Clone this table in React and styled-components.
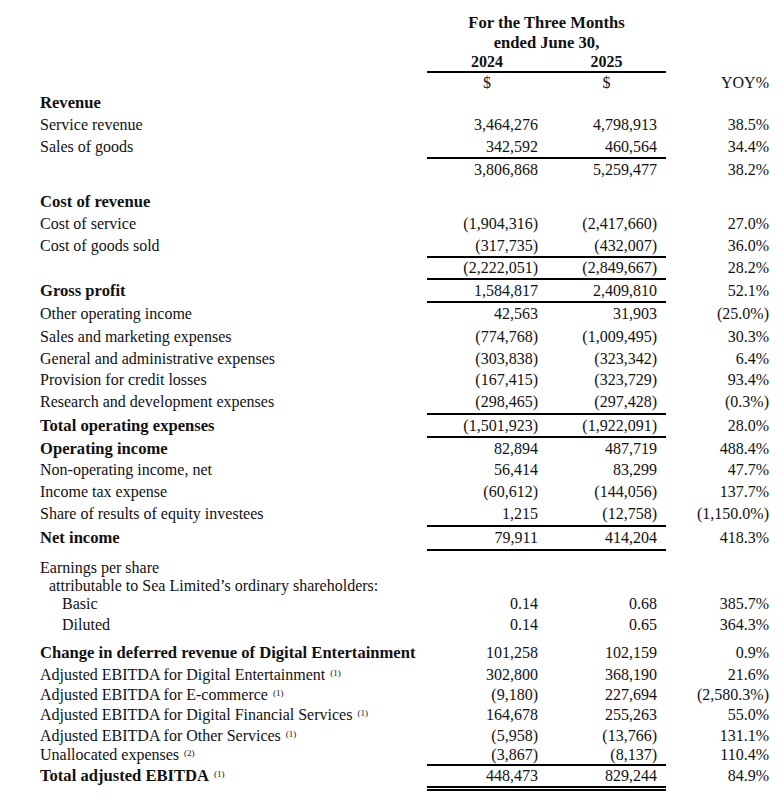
import React from "react";
import styled, { createGlobalStyle } from "styled-components";

const Global = createGlobalStyle`
  html, body { margin: 0; padding: 0; background: #fff; }
  body { font-family: "Liberation Serif", "Times New Roman", serif; color: #111; }
`;

const Page = styled.div`
  padding: 13px 0 0 40px;
  width: 744px;
`;

const Row = styled.div`
  display: grid;
  grid-template-columns: 387px 120px 119px 103px;
  margin-top: ${(p) => p.$gap || 0}px;
  font-size: 16px;
  & > * {
    height: ${(p) => p.$h}px;
    line-height: ${(p) => p.$h}px;
    border-style: solid;
    border-left-width: 0;
    border-right-width: 0;
    border-top-width: ${(p) => (p.$top ? 2 : 0)}px;
    border-bottom-width: ${(p) => (p.$double ? 5 : p.$bottom ? 2 : 0)}px;
    border-bottom-style: ${(p) => (p.$double ? "double" : "solid")};
    white-space: nowrap;
  }
`;

const Label = styled.div`
  border-color: transparent;
  padding-left: ${(p) => p.$indent || 0}px;
  font-weight: ${(p) => (p.$bold ? 700 : 400)};
  font-size: ${(p) => (p.$bold ? 16.6 : 16)}px;
`;

const Amount = styled.div`
  border-color: #000;
  text-align: ${(p) => (p.$center ? "center" : "right")};
  padding-right: ${(p) => (p.$center ? 0 : 9)}px;
  font-weight: ${(p) => (p.$bold ? 700 : 400)};
`;

const Period = styled.div`
  grid-column: 2 / 4;
  text-align: center;
  font-weight: 700;
  font-size: 16.6px;
  border-color: transparent;
`;

const Pct = styled.div`
  border-color: transparent;
  text-align: right;
`;

const Note = styled.span`
  font-size: 9px;
  font-weight: 400;
  vertical-align: 4px;
  margin-left: 5px;
  line-height: 0;
`;

const rows = [
  { label: "Revenue", bold: true, h: 22 },
  { label: "Service revenue", a: "3,464,276", b: "4,798,913", y: "38.5%", h: 22 },
  { label: "Sales of goods", a: "342,592", b: "460,564", y: "34.4%", h: 21 },
  { label: "", a: "3,806,868", b: "5,259,477", y: "38.2%", h: 22, top: true },
  { label: "Cost of revenue", bold: true, h: 22, gap: 10 },
  { label: "Cost of service", a: "(1,904,316)", b: "(2,417,660)", y: "27.0%", h: 22 },
  { label: "Cost of goods sold", a: "(317,735)", b: "(432,007)", y: "36.0%", h: 21 },
  { label: "", a: "(2,222,051)", b: "(2,849,667)", y: "28.2%", h: 20, top: true },
  { label: "Gross profit", bold: true, a: "1,584,817", b: "2,409,810", y: "52.1%", h: 21, top: true },
  { label: "Other operating income", a: "42,563", b: "31,903", y: "(25.0%)", h: 22, top: true },
  { label: "Sales and marketing expenses", a: "(774,768)", b: "(1,009,495)", y: "30.3%", h: 23 },
  { label: "General and administrative expenses", a: "(303,838)", b: "(323,342)", y: "6.4%", h: 21 },
  { label: "Provision for credit losses", a: "(167,415)", b: "(323,729)", y: "93.4%", h: 22 },
  { label: "Research and development expenses", a: "(298,465)", b: "(297,428)", y: "(0.3%)", h: 22 },
  { label: "Total operating expenses", bold: true, a: "(1,501,923)", b: "(1,922,091)", y: "28.0%", h: 21, top: true },
  { label: "Operating income", bold: true, a: "82,894", b: "487,719", y: "488.4%", h: 21, top: true },
  { label: "Non-operating income, net", a: "56,414", b: "83,299", y: "47.7%", h: 22 },
  { label: "Income tax expense", a: "(60,612)", b: "(144,056)", y: "137.7%", h: 22 },
  { label: "Share of results of equity investees", a: "1,215", b: "(12,758)", y: "(1,150.0%)", h: 22 },
  { label: "Net income", bold: true, a: "79,911", b: "414,204", y: "418.3%", h: 22, top: true, bottom: true },
  { label: "Earnings per share", h: 18, gap: 8 },
  { label: "attributable to Sea Limited\u2019s ordinary shareholders:", indent: 9, h: 18 },
  { label: "Basic", indent: 22, a: "0.14", b: "0.68", y: "385.7%", h: 18 },
  { label: "Diluted", indent: 22, a: "0.14", b: "0.65", y: "364.3%", h: 23 },
  { label: "Change in deferred revenue of Digital Entertainment", bold: true, a: "101,258", b: "102,159", y: "0.9%", h: 22, gap: 6 },
  { label: "Adjusted EBITDA for Digital Entertainment", note: "(1)", a: "302,800", b: "368,190", y: "21.6%", h: 21 },
  { label: "Adjusted EBITDA for E-commerce", note: "(1)", a: "(9,180)", b: "227,694", y: "(2,580.3%)", h: 19 },
  { label: "Adjusted EBITDA for Digital Financial Services", note: "(1)", a: "164,678", b: "255,263", y: "55.0%", h: 21 },
  { label: "Adjusted EBITDA for Other Services", note: "(1)", a: "(5,958)", b: "(13,766)", y: "131.1%", h: 21 },
  { label: "Unallocated expenses", note: "(2)", a: "(3,867)", b: "(8,137)", y: "110.4%", h: 18 },
  { label: "Total adjusted EBITDA", note: "(1)", bold: true, a: "448,473", b: "829,244", y: "84.9%", h: 20, top: true, double: true },
];

export default function App() {
  return (
    <>
      <Global />
      <Page>
        <Row $h={20}>
          <Label />
          <Period>For the Three Months</Period>
          <Pct />
        </Row>
        <Row $h={20}>
          <Label />
          <Period>ended June 30,</Period>
          <Pct />
        </Row>
        <Row $h={18} $bottom>
          <Label />
          <Amount $center $bold>2024</Amount>
          <Amount $center $bold>2025</Amount>
          <Pct />
        </Row>
        <Row $h={19}>
          <Label />
          <Amount $center>$</Amount>
          <Amount $center>$</Amount>
          <Pct>YOY%</Pct>
        </Row>
        {rows.map((r, i) => (
          <Row key={i} $h={r.h} $gap={r.gap} $top={r.top} $bottom={r.bottom} $double={r.double}>
            <Label $bold={r.bold} $indent={r.indent}>
              {r.label}
              {r.note && <Note>{r.note}</Note>}
            </Label>
            <Amount>{r.a}</Amount>
            <Amount>{r.b}</Amount>
            <Pct>{r.y}</Pct>
          </Row>
        ))}
      </Page>
    </>
  );
}
